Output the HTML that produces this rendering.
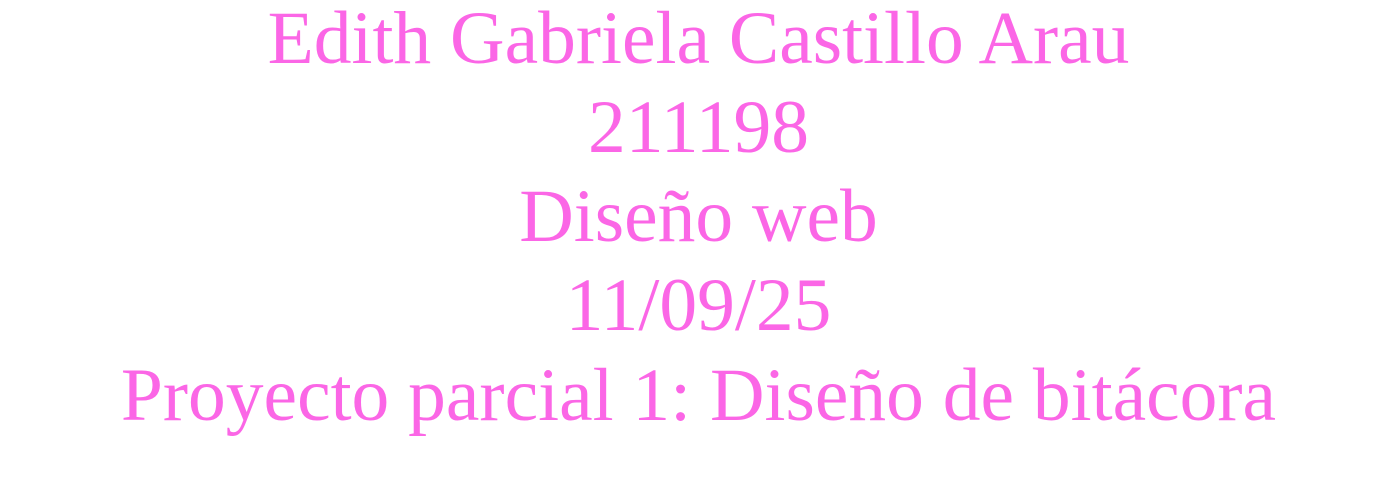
<!DOCTYPE html>
<html><head><meta charset="utf-8"><style>
html,body{margin:0;padding:0;background:#fff;width:1397px;height:490px;overflow:hidden}
.t{font-family:"Liberation Serif",serif;color:#fb66e6;font-size:75.5px;line-height:89.3px;text-align:center;width:1397px;position:absolute;top:-6.5px;left:0;white-space:nowrap}
</style></head><body>
<div class="t">Edith Gabriela Castillo Arau<br>211198<br>Diseño web<br>11/09/25<br>Proyecto parcial 1: Diseño de bitácora</div>
</body></html>
